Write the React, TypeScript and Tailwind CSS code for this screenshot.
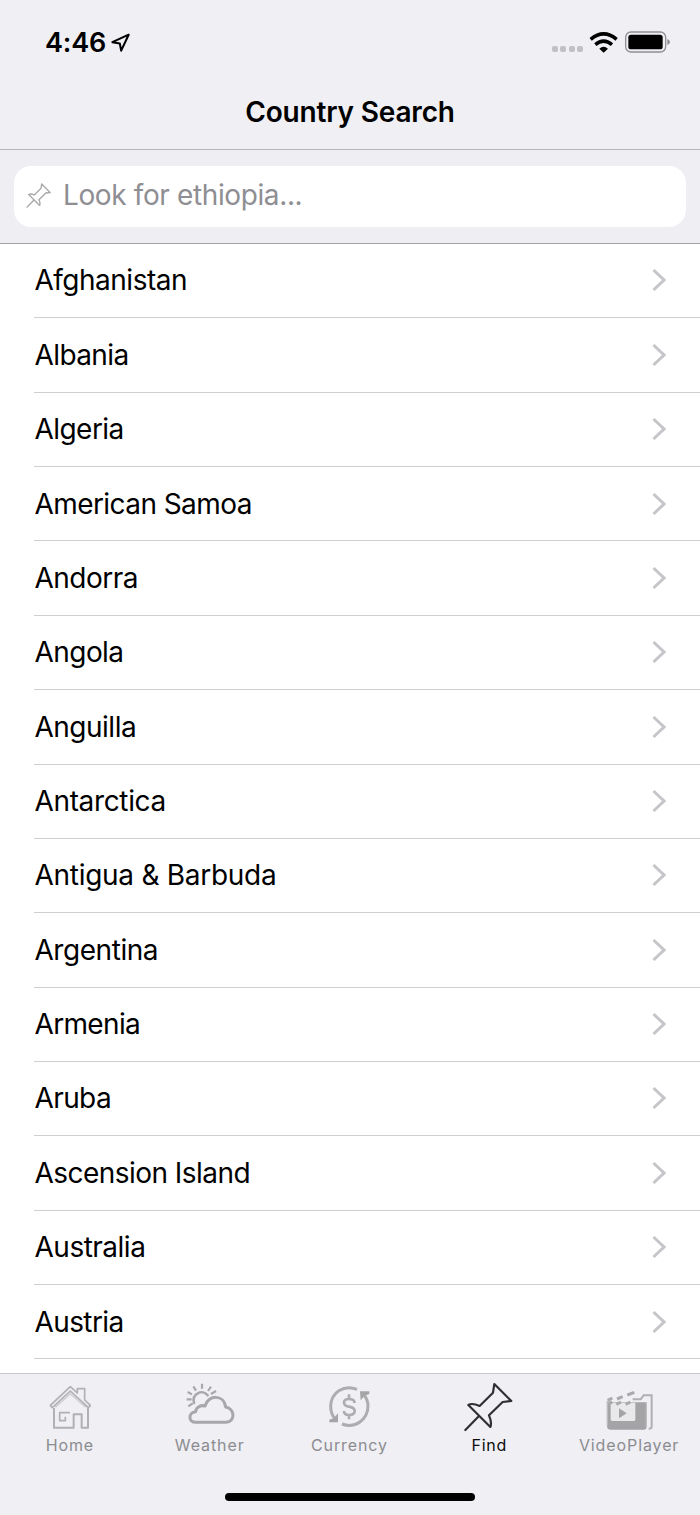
import React from "react";

const countries: { name: string; tracking: string }[] = [
  { name: "Afghanistan", tracking: "tracking-[-0.5px]" },
  { name: "Albania", tracking: "tracking-[-0.6px]" },
  { name: "Algeria", tracking: "tracking-[-0.55px]" },
  { name: "American Samoa", tracking: "tracking-[-0.57px]" },
  { name: "Andorra", tracking: "tracking-[-0.5px]" },
  { name: "Angola", tracking: "tracking-[-0.55px]" },
  { name: "Anguilla", tracking: "tracking-[-0.5px]" },
  { name: "Antarctica", tracking: "tracking-[-0.35px]" },
  { name: "Antigua & Barbuda", tracking: "tracking-[-0.28px]" },
  { name: "Argentina", tracking: "tracking-[-0.45px]" },
  { name: "Armenia", tracking: "tracking-[-0.65px]" },
  { name: "Aruba", tracking: "tracking-[-0.6px]" },
  { name: "Ascension Island", tracking: "tracking-[-0.54px]" },
  { name: "Australia", tracking: "tracking-[-0.5px]" },
  { name: "Austria", tracking: "tracking-[-0.6px]" },
];

function HomeIcon() {
  return (
    <svg viewBox="75 35 150 150" className="size-[50px]" fill="none" stroke="#b1b1b3" strokeWidth="5" strokeLinejoin="round">
      <path d="M91 105 L151 49 L172 68 V55 H194 V89 L211 105 L205 112 L151 62 L97 112 Z" />
      <path d="M151 70 L106 111 M151 70 L197 111" strokeWidth="4" opacity=".55" />
      <path d="M102 113 V172 H161 V132 H185 V172 H204 V113" strokeWidth="6" />
      <path d="M150 127 H119 V151 H136 V139" />
    </svg>
  );
}

function WeatherIcon() {
  return (
    <svg viewBox="75 35 150 150" className="size-[50px]" fill="none" stroke="#a8a8aa" strokeLinecap="round" strokeLinejoin="round">
      <path strokeWidth="9" d="M107 156 C85 156 83 127 107 124 C108 111 122 103 135 107 C144 73 192 71 197 110 C225 115 227 155 198 156 Z" />
      <path strokeWidth="7.5" d="M102 98 C95 69 128 55 143 75" />
      <path strokeWidth="6.5" strokeLinecap="butt" d="M126 40 V55 M100 48 L108 61 M153 49 L144 62 M83 65 L96 72 M168 62 L153 71 M80 87 H95 M85 108 L98 99" />
    </svg>
  );
}

function CurrencyIcon() {
  return (
    <svg viewBox="87 35 150 150" className="size-[50px]" fill="none" stroke="#adadaf">
      <path strokeWidth="9" d="M186 57 C148 42 108 65 107 108 C107 126 112 137 121 147" />
      <path strokeWidth="9" d="M141 161 C181 177 218 147 219 108 C219 94 214 81 205 71" />
      <path fill="#a5a5a7" stroke="none" d="M195 63 H223 V71 L209 76 L197 90 Z M103 156 V148 L117 143 L129 129 V156 Z" />
      <path strokeWidth="8" d="M178 98 V94 Q176 86 162 86 Q147 86 147 97 Q147 106 162 109 Q179 112 179 122 Q179 134 162 134 Q147 134 147 122 M162 72 V87 M162 134 V147" />
    </svg>
  );
}

function PinIcon({ className, stroke, width }: { className: string; stroke: string; width: number }) {
  return (
    <svg viewBox="99 35 150 150" className={className} fill="none" stroke={stroke} strokeWidth={width} strokeLinejoin="round" strokeLinecap="round">
      <path d="M193 41 L244 92 L218 95 L177 135 C183 149 186 158 181 170 L115 104 C124 98 136 101 149 107 L189 67 Z M147 137 L106 179" />
    </svg>
  );
}

function VideoIcon() {
  return (
    <svg viewBox="102 35 150 150" className="size-[50px]">
      <path fill="#a4a4a6" d="M112 96 H229 V174 Q229 178 221 178 H122 Q111 178 111 166 Z" />
      <path fill="#e9e9ec" d="M122 97 H196 V148 Q196 152 191 152 H127 Q122 152 122 147 Z" />
      <path fill="#a4a4a6" d="M147 114 L170 129 L147 144 Z" />
      <path fill="none" stroke="#b0b0b2" strokeWidth="6" d="M188 87 H212 L221 75 H245 V169 Q245 175 236 175" />
      <path stroke="#aaaaac" strokeWidth="9" d="M113 90 L127 83 M141 86 L158 79 M172 74 L193 66 M113 101 L127 95 M139 102 L153 95 M167 102 L181 95" />
      <path stroke="#bcbcbe" strokeWidth="4" d="M112 91 V166 M229 96 V170" />
    </svg>
  );
}

const tabs = [
  { name: "Home", icon: <HomeIcon />, color: "text-[#8c8c90]", tracking: "tracking-[0.9px]" },
  { name: "Weather", icon: <WeatherIcon />, color: "text-[#8c8c90]", tracking: "tracking-[0.9px]" },
  { name: "Currency", icon: <CurrencyIcon />, color: "text-[#8c8c90]", tracking: "tracking-[0.9px]" },
  { name: "Find", icon: <PinIcon className="size-[50px] -translate-x-px" stroke="#303032" width={6.5} />, color: "text-[#0c0c0d]", tracking: "tracking-[0.7px]" },
  { name: "VideoPlayer", icon: <VideoIcon />, color: "text-[#8c8c90]", tracking: "tracking-[0.9px]" },
];

function StatusBar() {
  return (
    <div className="flex h-[84px] items-start justify-between pl-[45px] pr-[29px] pt-[28px]">
      <div className="flex items-center">
        <span className="text-[27px] leading-[30px] font-semibold tracking-[-0.2px]">4:46</span>
        <svg viewBox="244 38 56 56" className="mb-[2px] ml-[5px] size-[19px]" fill="none" stroke="#000" strokeWidth="6" strokeLinejoin="round">
          <path d="M296 43 L248 65 L270 69 L274 90 Z" />
        </svg>
      </div>
      <div className="flex items-center pt-[3px]">
        <div className="mt-[13px] flex gap-[2.5px]">
          {[0, 1, 2, 3].map((i) => (
            <span key={i} className="size-[6px] rounded-[2px] bg-[#c1c1c4]" />
          ))}
        </div>
        <svg viewBox="150 32 88 66" className="ml-[6px] h-[22px] w-[29.3px]" fill="none" stroke="#000" strokeWidth="10.5">
          <path d="M155 57 Q194 24 233 57 M169 73 Q194 52 219 73" />
          <path fill="#000" stroke="none" d="M181 85 Q194 74 207 85 L194 97 Z" />
        </svg>
        <svg viewBox="258 33 138 66" className="ml-[6.5px] h-[22px] w-[46px]" fill="none">
          <rect x="260" y="36" width="120" height="60" rx="16" stroke="#8f8f93" strokeWidth="4" />
          <rect x="268" y="44" width="103" height="44" rx="8" fill="#000" />
          <path d="M385 57 Q393 60 393 66 Q393 72 385 75 Z" fill="#8f8f93" />
        </svg>
      </div>
    </div>
  );
}

export default function App() {
  return (
    <div className="flex h-[1515px] w-[700px] flex-col overflow-hidden bg-white font-['Inter','Liberation_Sans',sans-serif] text-black">
      <header className="h-[150px] shrink-0 border-b border-[#b5b5ba] bg-[#efeff4]">
        <StatusBar />
        <h1 className="text-center text-[28px] leading-[56px] font-semibold tracking-[-0.18px]">Country Search</h1>
      </header>
      <div className="h-[94px] shrink-0 border-b border-[#a1a1a6] bg-[#eeeef3] px-[14px] pt-4">
        <div className="flex h-[61px] items-center rounded-[17px] bg-white pb-[2px] pl-3">
          <PinIcon className="size-[25px]" stroke="#a8a8ab" width={8} />
          <span className="-mt-px ml-[12px] text-[28px] leading-[56px] tracking-[-0.38px] text-[#8e8e93]">Look for ethiopia...</span>
        </div>
      </div>
      <ul className="min-h-0 flex-1 overflow-hidden">
        {countries.map((c) => (
          <li key={c.name} className="h-[74.36px] pl-[34px]">
            <div className="flex h-full items-center justify-between border-b border-[#cfcfd2] pb-[0.4px] pl-[0.5px] pr-[34px]">
              <span className={`text-[28px] leading-[72px] ${c.tracking}`}>{c.name}</span>
              <svg viewBox="0 0 14 24" className="h-[24px] w-[14px]" fill="none" stroke="#c5c5ca" strokeWidth="3">
                <path d="M1.5 2 L12 12 L1.5 22" />
              </svg>
            </div>
          </li>
        ))}
      </ul>
      <nav className="h-[142px] shrink-0 border-t border-[#c9c9cc] bg-[#efeff4] pt-2">
        <div className="grid w-[699px] grid-cols-5">
          {tabs.map((t) => (
            <div key={t.name} className={`flex flex-col items-center ${t.color}`}>
              {t.icon}
              <span className={`mt-[2px] text-[16px] leading-[22px] font-normal ${t.tracking}`}>{t.name}</span>
            </div>
          ))}
        </div>
        <div className="mx-auto mt-[37px] h-[8px] w-[250px] rounded-full bg-black" />
      </nav>
    </div>
  );
}
